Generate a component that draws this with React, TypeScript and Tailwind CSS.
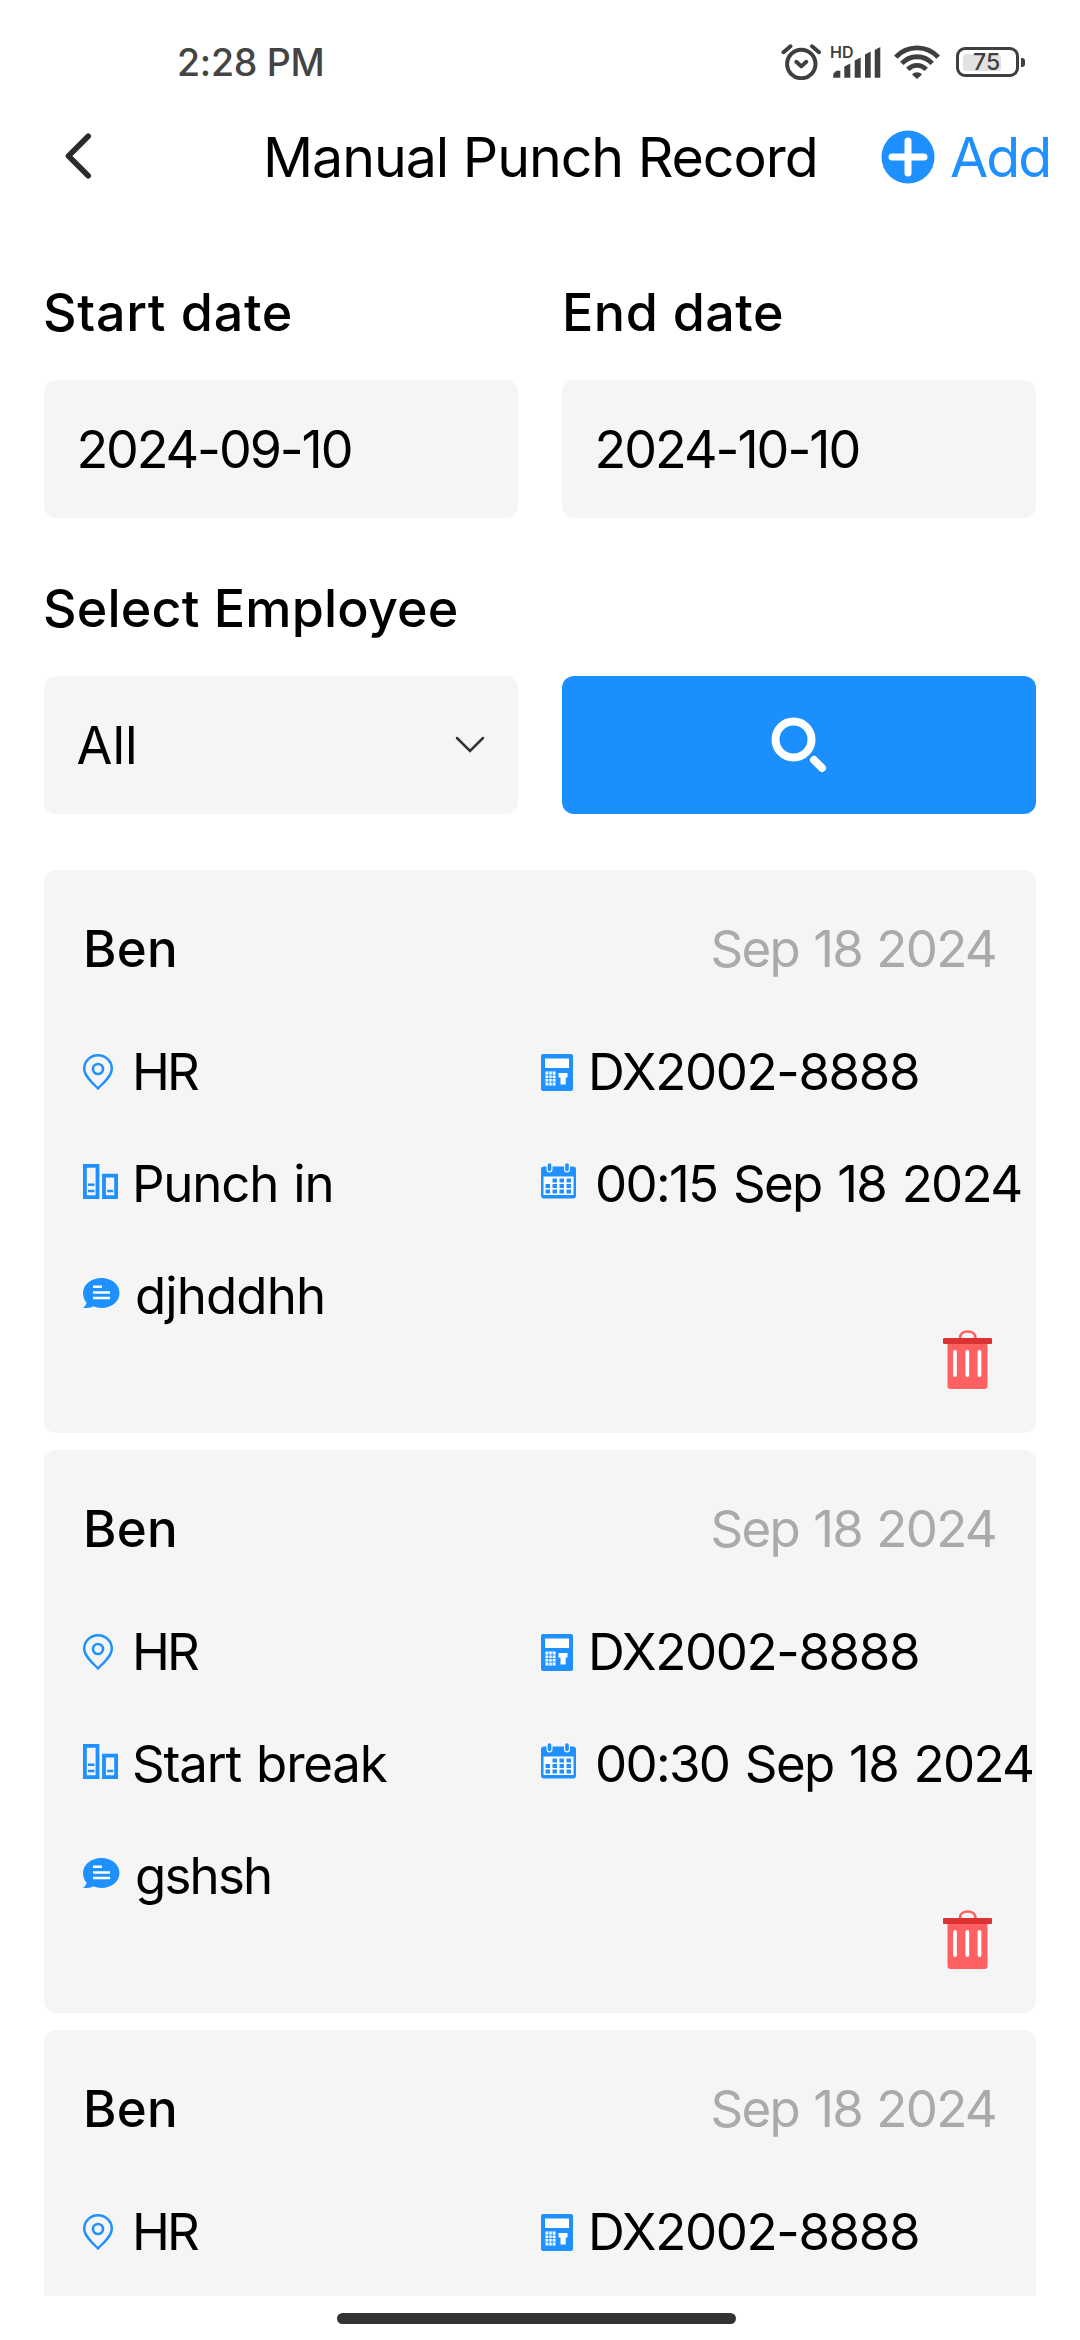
import type { ReactNode } from 'react';

type PunchRecord = {
  name: string;
  date: string;
  department: string;
  device: string;
  punch?: {
    action: string;
    time: string;
    comment: string;
    commentClass: string;
  };
};

const records: PunchRecord[] = [
  {
    name: 'Ben',
    date: 'Sep 18 2024',
    department: 'HR',
    device: 'DX2002-8888',
    punch: {
      action: 'Punch in',
      time: '00:15 Sep 18 2024',
      comment: 'djhddhh',
      commentClass: 'tracking-[-0.9px]',
    },
  },
  {
    name: 'Ben',
    date: 'Sep 18 2024',
    department: 'HR',
    device: 'DX2002-8888',
    punch: {
      action: 'Start break',
      time: '00:30 Sep 18 2024',
      comment: 'gshsh',
      commentClass: 'tracking-[-1.8px]',
    },
  },
  {
    name: 'Ben',
    date: 'Sep 18 2024',
    department: 'HR',
    device: 'DX2002-8888',
  },
];

function AlarmIcon() {
  return (
    <svg width="40" height="36" viewBox="0 0 40 36" fill="none" stroke="#3f3f3f" strokeLinecap="round">
      <circle cx="20.3" cy="20" r="14.2" strokeWidth="4" />
      <path d="M2.5 8.2 9.5 2.3M31 2.3l7 5.9" strokeWidth="4" />
      <path d="M15.3 17.8l5 4.6 5-4.6" strokeWidth="4" strokeLinejoin="round" />
    </svg>
  );
}

function SignalIcon() {
  return (
    <div className="relative h-[34px] w-[50px]">
      <svg width="50" height="34" viewBox="0 0 50 34" fill="#3f3f3f">
        <path d="M2.3 32.700v-4l3-3h4v7zM13.300 32.700V21.500l6-3v14.200zM23.700 32.700V15.500l6-3v20.200zM34 32.700V9.500l5.700-3v26.200zM43.700 32.700V5l5.600-3v30.700z" />
      </svg>
      <span className="absolute -top-[2px] left-[-1px] text-[16px] leading-[18px] font-semibold text-[#3f3f3f]">HD</span>
    </div>
  );
}

function WifiIcon() {
  return (
    <svg width="46" height="34" viewBox="0 0 46 34" fill="none" stroke="#3f3f3f" strokeWidth="4.8">
      <path d="M1.8 12.2C13-.3 33-.3 44.200 12.200" />
      <path d="M7.800 18.400c8.500-8.900 21.900-8.900 30.400 0" />
      <path d="M13.800 24.400c5.300-5.500 13.100-5.500 18.400 0" />
      <path d="M18 29.500c2.800-3 7.200-3 10 0L23 34z" fill="#3f3f3f" stroke="none" />
    </svg>
  );
}

function Battery() {
  return (
    <div className="flex items-center gap-[2px]">
      <div className="flex h-[30px] w-[63px] items-center rounded-[9px] border-[3px] border-[#3f3f3f] p-[4px]">
        <div className="h-[17px] w-[38px] rounded-[3px] bg-[#e2e2e2]">
          <span className="block pl-[10px] text-[23px] leading-[17px] font-medium text-[#3f3f3f]">75</span>
        </div>
      </div>
      <div className="h-[9px] w-[4px] rounded-r-[3px] bg-[#3f3f3f]" />
    </div>
  );
}

function StatusBar() {
  return (
    <div className="flex h-[124px] items-center pl-[177px]">
      <span className="w-[604px] pt-px text-[37.5px] leading-none font-medium tracking-[-0.3px] text-[#444]">2:28 PM</span>
      <AlarmIcon />
      <div className="ml-[10px]">
        <SignalIcon />
      </div>
      <div className="ml-[13px]">
        <WifiIcon />
      </div>
      <div className="ml-[16px]">
        <Battery />
      </div>
    </div>
  );
}

function Header() {
  return (
    <header className="flex h-[66px] items-center pl-[64px] leading-none">
      <button type="button" aria-label="Back" className="w-[199px] pb-[3px]">
        <svg width="28" height="46" viewBox="0 0 28 46" fill="none" stroke="#2b2b2b" strokeWidth="5.600" strokeLinecap="round" strokeLinejoin="round">
          <path d="M24.200 3.300 4.500 23l19.700 19.700" />
        </svg>
      </button>
      <h1 className="w-[618px] text-[55.5px] tracking-[-1.05px] whitespace-nowrap">Manual Punch Record</h1>
      <button type="button" className="flex items-center gap-[15px] text-[#1e90ff]">
        <svg className="mb-px" width="54" height="54" viewBox="0 0 54 54">
          <circle cx="27" cy="27" r="26.500" fill="#1e90ff" />
          <path d="M27 11v32M11 27h32" stroke="#fff" strokeWidth="7" strokeLinecap="round" />
        </svg>
        <span className="text-[55.5px] tracking-[-2px]">Add</span>
      </button>
    </header>
  );
}

function Field(props: { children: ReactNode }) {
  return (
    <div className="flex h-[138px] items-center justify-between rounded-[12px] bg-[#f5f5f5] pr-[33px] pl-[32.5px] text-[52px] leading-none">
      {props.children}
    </div>
  );
}

function Filters() {
  return (
    <section className="grid grid-cols-2 gap-x-[44px] px-[44px] pt-[97px]">
      <label className="mb-[41px] -ml-px text-[52px] leading-none font-medium tracking-[0.7px]">Start date</label>
      <label className="mb-[41px] text-[52px] leading-none font-medium tracking-[0.5px]">End date</label>
      <Field>
        <span className="pt-[2px] tracking-[-2.100px]">2024-09-10</span>
      </Field>
      <Field>
        <span className="pt-[2px] tracking-[-2px]">2024-10-10</span>
      </Field>
      <label className="col-span-2 mt-[65px] mb-[41px] -ml-px text-[52px] leading-none font-medium tracking-[0.200px]">
        Select Employee
      </label>
      <Field>
        <span className="pt-[2px]">All</span>
        <svg width="30" height="18" viewBox="0 0 30 18" fill="none" stroke="#333" strokeWidth="2.500" strokeLinecap="round">
          <path d="M2 2l13 13L28 2" />
        </svg>
      </Field>
      <button type="button" aria-label="Search" className="flex h-[138px] items-center justify-center rounded-[12px] bg-[#1c8fff]">
        <svg width="58" height="58" viewBox="0 0 58 58" fill="none" stroke="#fff">
          <circle cx="23.500" cy="23.500" r="18" strokeWidth="8" />
          <path d="M44 44l8 8" strokeWidth="8" strokeLinecap="round" />
        </svg>
      </button>
    </section>
  );
}

function PinIcon() {
  return (
    <svg width="30" height="36" viewBox="0 0 30 36" fill="none" stroke="#1e90ff">
      <path d="M15 34.500C10.500 29.500 1.200 22.500 1.200 14.700a13.800 13.500 0 0 1 27.600 0C28.800 22.500 19.500 29.500 15 34.500z" strokeWidth="2.400" />
      <circle cx="15" cy="15" r="5" strokeWidth="2.600" />
    </svg>
  );
}

function BuildingIcon() {
  return (
    <svg className="mb-[5px]" width="35" height="35" viewBox="0 0 35 35" fill="none" stroke="#1e90ff">
      <path d="M1.900 1.900h12.600v31.200H1.900zM21 11.700h12.100v21.400H21z" strokeWidth="3.800" />
      <path d="M5 20.800h6.500M5 27h6.500M24.200 27h6" strokeWidth="2.500" />
    </svg>
  );
}

function CommentIcon() {
  return (
    <svg className="mb-[6px]" width="37" height="30" viewBox="0 0 37 30">
      <path
        d="M18.500 0C28.500 0 36.500 6.500 36.500 15s-8 15-18 15c-3 0-5.500-.6-8-1.700-2.500 1.500-6 1.700-10.500 1.700 2-1.700 3.500-3.500 3.600-5.200C1.300 22.200 0 18.800 0 15 0 6.500 8.500 0 18.500 0z"
        fill="#1e90ff"
      />
      <path d="M10 8.700h9M10 14.500h17M10 20h17" stroke="#fff" strokeWidth="2.600" />
    </svg>
  );
}

function DeviceIcon() {
  return (
    <svg width="32" height="37" viewBox="0 0 32 37">
      <rect width="32" height="37" rx="2" fill="#1e90ff" />
      <path d="M4 4.500h24v9.500H4z" fill="#fff" />
      <path d="M4.500 17.500h10v14h-10zM17.500 19h9v4.500h-1.800v7h-5.200v-7h-2z" fill="#fff" />
      <path d="M7.800 17.500v14M11.200 17.500v14M4.500 21h10M4.500 24.500h10M4.500 28h10" stroke="#1e90ff" strokeWidth=".9" />
    </svg>
  );
}

function CalendarIcon() {
  return (
    <svg className="mb-[7px]" width="35" height="36" viewBox="0 0 35 36">
      <rect y="3.500" width="35" height="32" rx="3" fill="#1e90ff" />
      <path d="M8.500 2v4.500M26 2v4.500" stroke="#f5f5f5" strokeWidth="6" strokeLinecap="round" />
      <path d="M8.500 2v4.500M26 2v4.500" stroke="#1e90ff" strokeWidth="3.600" strokeLinecap="round" />
      <path d="M2.500 13.500h30v18.500h-30z" fill="#fff" />
      <path
        d="M11.500 15.500h4.500v4h-4.500zM18.500 15.500H23v4h-4.500zM25.500 15.500H30v4h-4.500zM4.500 21H9v4H4.500zM11.500 21h4.500v4h-4.500zM18.500 21H23v4h-4.500zM25.500 21H30v4h-4.500zM4.500 26.500H9v4H4.500zM11.500 26.500h4.500v4h-4.500zM18.500 26.500H23v4h-4.500zM25.500 26.500H30v4h-4.500z"
        fill="#1e90ff"
      />
    </svg>
  );
}

function TrashIcon() {
  return (
    <svg width="49" height="59" viewBox="0 0 49 59">
      <path d="M17 9v-1c0-4 3-6.500 7.700-6.500S32.500 4 32.500 8v1" fill="none" stroke="#ff5f5f" strokeWidth="2.600" />
      <path d="M4.500 13h40v43a3 3 0 0 1-3 3h-34a3 3 0 0 1-3-3z" fill="#ff6062" />
      <rect y="8" width="49" height="6" rx="1" fill="#dc3232" />
      <path d="M12 22v23M24.300 22v23M36.500 22v23" stroke="#fff" strokeWidth="3.800" strokeLinecap="round" />
    </svg>
  );
}

function RecordCard({ record }: { record: PunchRecord }) {
  const { punch } = record;

  return (
    <article className="h-[563px] shrink-0 rounded-[12px] bg-[#f5f5f5] pt-[23px] pl-[39px] text-[51px] leading-none whitespace-nowrap">
      <div className="mb-[12px] flex h-[111px] items-center justify-between pr-[40px]">
        <span className="font-medium tracking-[0.300px]">{record.name}</span>
        <span className="tracking-[-1.700px] text-[#aaa] [word-spacing:1.500px]">{record.date}</span>
      </div>
      <div className="grid grid-cols-[458px_1fr]">
        <div className="flex h-[112px] items-center">
          <span className="w-[49px]"><PinIcon /></span>
          <span className="pb-px tracking-[-3px]">{record.department}</span>
        </div>
        <div className="flex h-[112px] items-center">
          <span className="w-[47px]"><DeviceIcon /></span>
          <span className="pb-px tracking-[-1.350px]">{record.device}</span>
        </div>
        {punch && (
          <>
            <div className="flex h-[112px] items-center">
              <span className="w-[49px]"><BuildingIcon /></span>
              <span className="pb-[2px] tracking-[-1.200px] [word-spacing:2px]">{punch.action}</span>
            </div>
            <div className="flex h-[112px] items-center">
              <span className="w-[54px] shrink-0"><CalendarIcon /></span>
              <span className="pb-[2px] tracking-[-1.700px] [word-spacing:3px]">{punch.time}</span>
            </div>
            <div className="flex h-[112px] items-center">
              <span className="w-[52px]"><CommentIcon /></span>
              <span className={`pb-[2px] ${punch.commentClass}`}>{punch.comment}</span>
            </div>
            <button type="button" aria-label="Delete" className="mr-[44px] flex h-[149px] items-end justify-end">
              <TrashIcon />
            </button>
          </>
        )}
      </div>
    </article>
  );
}

export default function App() {
  return (
    <div className="flex h-[2340px] w-[1080px] flex-col overflow-hidden bg-white font-['Inter',sans-serif] text-black">
      <StatusBar />
      <Header />
      <Filters />
      <main className="mx-[44px] mt-[56px] flex h-[1426px] shrink-0 flex-col gap-[17px] overflow-hidden">
        {records.map((record, i) => (
          <RecordCard key={i} record={record} />
        ))}
      </main>
      <div className="mt-[17px] ml-[337px] h-[11px] w-[399px] shrink-0 rounded-full bg-[#333]" />
    </div>
  );
}
